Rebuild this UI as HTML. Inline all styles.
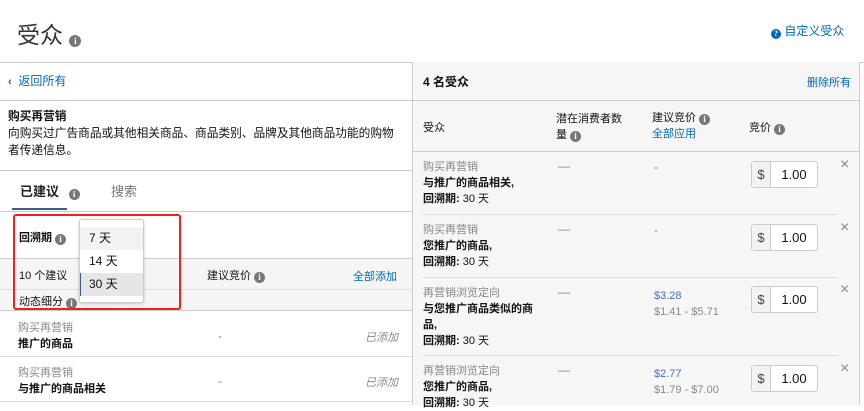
<!DOCTYPE html>
<html><head><meta charset="utf-8"><style>
*{box-sizing:border-box;margin:0;padding:0}
body{width:864px;height:405px;overflow:hidden;background:#fff;font-family:"Liberation Sans","Noto Sans CJK SC",sans-serif;font-size:12px;color:#111;position:relative}
.a{position:absolute}
.i{display:inline-block;width:11px;height:11px;border-radius:50%;background:#777;color:#fff;font-size:9px;line-height:11px;text-align:center;font-weight:bold;vertical-align:-1px;font-family:"Liberation Serif",serif}
.blue{color:#0066c0}
.g{color:#888}
.hl{position:absolute;height:1px;background:#ccc}
.box{position:absolute;width:67px;height:27px;border:1px solid #ccc;border-radius:3px;background:#fff;display:flex}
.box span:first-child{width:19px;background:#f3f3f3;border-right:1px solid #ccc;text-align:center;line-height:25px;font-size:13px;color:#444}
.box span:last-child{flex:1;text-align:center;line-height:25px;font-size:13px}
.x{position:absolute;left:840px;font-size:16px;color:#888}
</style></head><body>
<div class="a" style="left:17px;top:16px;font-size:23px;color:#333">受众 <span class="i" style="width:12px;height:12px;line-height:12px">i</span></div>
<div class="a blue" style="left:771px;top:22px;font-size:12px"><span class="i" style="background:#0066c0;width:10px;height:10px;line-height:10px;font-size:8px">?</span> 自定义受众</div>
<div class="hl" style="left:0;top:62px;width:864px"></div>
<!-- right panel -->
<div class="a" style="left:412px;top:62px;width:448px;height:343px;background:#f6f6f6;border-left:1px solid #ccc;border-right:1px solid #ccc"></div>
<div class="a" style="left:423px;top:73px;font-weight:bold;font-size:12px">4 名受众</div>
<div class="a blue" style="left:807px;top:74px;font-size:11px">删除所有</div>
<div class="hl" style="left:412px;top:100px;width:448px"></div>
<div class="a" style="left:423px;top:119px;font-size:11px">受众</div>
<div class="a" style="left:556px;top:111px;font-size:11px;line-height:16px">潜在消费者数<br>量 <span class="i">i</span></div>
<div class="a" style="left:652px;top:110px;font-size:11px;line-height:16px">建议竞价 <span class="i">i</span><br><span class="blue">全部应用</span></div>
<div class="a" style="left:749px;top:119px;font-size:11px">竞价 <span class="i">i</span></div>
<div class="hl" style="left:412px;top:151px;width:448px"></div>

<div class="a" style="left:423px;top:159px;font-size:11px;line-height:16px"><span class="g">购买再营销</span><br><b>与推广的商品相关,</b><br><b>回溯期:</b> 30 天</div>
<div class="a g" style="left:558px;top:159px">—</div><div class="a g" style="left:654px;top:160px">-</div>
<div class="box" style="left:751px;top:161px"><span>$</span><span>1.00</span></div><div class="x" style="top:156px">×</div>
<div class="hl" style="left:423px;top:214px;width:415px;background:#ddd"></div>

<div class="a" style="left:423px;top:222px;font-size:11px;line-height:16px"><span class="g">购买再营销</span><br><b>您推广的商品,</b><br><b>回溯期:</b> 30 天</div>
<div class="a g" style="left:558px;top:222px">—</div><div class="a g" style="left:654px;top:223px">-</div>
<div class="box" style="left:751px;top:224px"><span>$</span><span>1.00</span></div><div class="x" style="top:219px">×</div>
<div class="hl" style="left:423px;top:277px;width:415px;background:#ddd"></div>

<div class="a" style="left:423px;top:285px;font-size:11px;line-height:16px;width:120px"><span class="g">再营销浏览定向</span><br><b>与您推广商品类似的商品,</b><br><b>回溯期:</b> 30 天</div>
<div class="a g" style="left:558px;top:285px">—</div>
<div class="a" style="left:654px;top:288px;font-size:11px;line-height:16px"><span style="color:#4a6fb5">$3.28</span><br><span class="g">$1.41 - $5.71</span></div>
<div class="box" style="left:751px;top:286px"><span>$</span><span>1.00</span></div><div class="x" style="top:281px">×</div>
<div class="hl" style="left:423px;top:355px;width:415px;background:#ddd"></div>

<div class="a" style="left:423px;top:363px;font-size:11px;line-height:16px"><span class="g">再营销浏览定向</span><br><b>您推广的商品,</b><br><b>回溯期:</b> 30 天</div>
<div class="a g" style="left:558px;top:363px">—</div>
<div class="a" style="left:654px;top:366px;font-size:11px;line-height:16px"><span style="color:#4a6fb5">$2.77</span><br><span class="g">$1.79 - $7.00</span></div>
<div class="box" style="left:751px;top:365px"><span>$</span><span>1.00</span></div><div class="x" style="top:360px">×</div>

<!-- left -->
<div class="a blue" style="left:8px;top:72px;font-size:12px"><b style="font-size:11px">‹</b>&nbsp; 返回所有</div>
<div class="hl" style="left:0;top:100px;width:412px"></div>
<div class="a" style="left:8px;top:108px;font-size:11.7px;line-height:17px"><b>购买再营销</b><br>向购买过广告商品或其他相关商品、商品类别、品牌及其他商品功能的购物<br>者传递信息。</div>
<div class="hl" style="left:0;top:170px;width:412px"></div>
<div class="a" style="left:20px;top:181px;font-size:13px;font-weight:bold;color:#222">已建议 <span class="i" style="margin-left:6px">i</span></div>
<div class="a" style="left:111px;top:181px;font-size:13px;color:#777">搜索</div>
<div class="a" style="left:12px;top:208px;width:55px;height:2px;background:#3a5f8f"></div>
<div class="hl" style="left:0;top:211px;width:412px"></div>
<div class="a" style="left:19px;top:229px;font-size:11px;font-weight:bold">回溯期 <span class="i">i</span></div>
<div class="a" style="left:0;top:258px;width:412px;height:53px;background:#f5f5f5;border-top:1px solid #ccc;border-bottom:1px solid #ccc"></div>
<div class="hl" style="left:0;top:289px;width:412px;background:#ddd"></div>
<div class="a" style="left:19px;top:267px;font-size:11px">10 个建议</div>
<div class="a" style="left:207px;top:267px;font-size:11px">建议竞价 <span class="i">i</span></div>
<div class="a blue" style="left:353px;top:268px;font-size:11px">全部添加</div>
<div class="a" style="left:19px;top:293px;font-size:11px">动态细分 <span class="i">i</span></div>
<div class="a" style="left:18px;top:320px;font-size:11px;line-height:16px"><span class="g">购买再营销</span><br><b>推广的商品</b></div>
<div class="a g" style="left:218px;top:329px">-</div>
<div class="a g" style="left:365px;top:329px;font-style:italic;font-size:11px">已添加</div>
<div class="hl" style="left:0;top:356px;width:412px;background:#ddd"></div>
<div class="a" style="left:18px;top:365px;font-size:11px;line-height:16px"><span class="g">购买再营销</span><br><b>与推广的商品相关</b></div>
<div class="a g" style="left:218px;top:374px">-</div>
<div class="a g" style="left:365px;top:374px;font-style:italic;font-size:11px">已添加</div>
<div class="hl" style="left:0;top:401px;width:412px;background:#ddd"></div>

<!-- red box and dropdown -->
<div class="a" style="left:13px;top:214px;width:168px;height:96px;border:2px solid #f0201a;border-radius:3px"></div>
<div class="a" style="left:79px;top:219px;width:65px;height:84px;background:#fff;border:1px solid #ccc;border-radius:3px;box-shadow:0 1px 3px rgba(0,0,0,.2);font-size:12px">
<div style="background:#f2f2f2;height:23px;margin-top:7px;padding-left:9px;line-height:23px">7 天</div>
<div style="height:23px;padding-left:9px;line-height:23px">14 天</div>
<div style="background:#e6e6e6;height:23px;padding-left:8px;line-height:23px;border-left:1px solid #3a5f8f">30 天</div>
</div>
</body></html>
